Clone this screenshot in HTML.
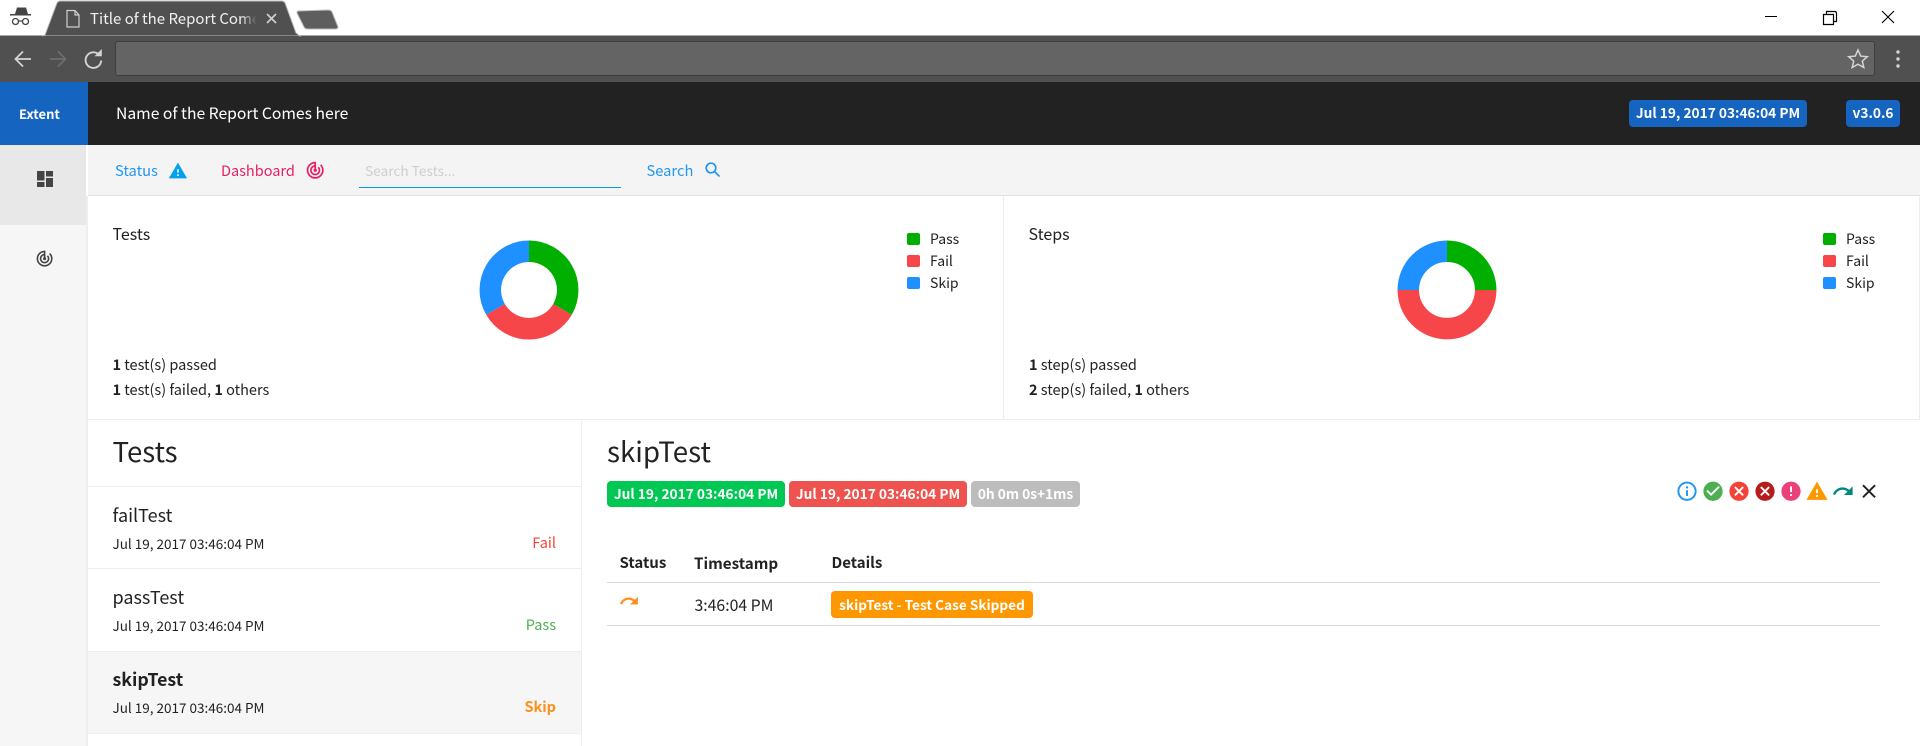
<!DOCTYPE html>
<html><head><meta charset="utf-8"><title>Title of the Report Comes here</title>
<style>
*{box-sizing:border-box}
html,body{margin:0;padding:0;width:1920px;height:746px;overflow:hidden;background:#fff}
body{position:relative;font-family:"Noto Sans CJK SC","Liberation Sans",sans-serif;color:#222;font-size:14px}
.a{position:absolute}
.t{position:absolute;white-space:nowrap;line-height:20px;height:20px}
.b{position:absolute;border-radius:4px;color:#fff;font-weight:700;font-size:13.700px;line-height:25.500px;text-align:center;white-space:nowrap}
svg{position:absolute;overflow:visible}
</style></head><body>
<!-- chrome -->
<div class="a" style="left:0;top:0;width:1920px;height:35px;background:#fff"></div>
<div class="a" style="left:0;top:35px;width:1920px;height:1px;background:#a8a8a8"></div>
<div class="a" style="left:0;top:36px;width:1920px;height:46px;background:#505050"></div>
<svg style="left:0;top:0" width="400" height="40">
<path d="M42 36 L45 35 L57 3 Q58 1 61 1 L281 1 Q284 1 285 3 L296 33 L300 36 Z" fill="#505050" stroke="#b8b8b8" stroke-width="1"/>
<path d="M43 36H299V38H43Z" fill="#505050"/>
<path d="M298 11 L328 10 Q331 10 332 12 L338 27 Q338 29 335 29 L308 29 Q305 29 304 27 L297 13 Q297 11 298 11Z" fill="#5e5e5e" stroke="#bbb" stroke-width="1"/>
<path d="M67 10.500H75L79 15V27H67Z M75 10.500V15H79" fill="none" stroke="#d0d0d0" stroke-width="1.200"/>
<path d="M267 14L276 23M276 14L267 23" stroke="#cfcfcf" stroke-width="1.700"/>
<path d="M15 14L17 7.500H26L28 14H31V15.500H10V14Z" fill="#444"/>
<circle cx="15.500" cy="21.500" r="3" fill="none" stroke="#444" stroke-width="1.300"/><circle cx="25.500" cy="21.500" r="3" fill="none" stroke="#444" stroke-width="1.300"/><path d="M18.500 21H22.500" stroke="#444" stroke-width="1.200"/>
</svg>
<div class="t" style="left:90px;top:8px;font-size:15px;line-height:22px;height:22px;width:167px;overflow:hidden;color:#f0f0f0;-webkit-mask-image:linear-gradient(90deg,#000 90%,transparent)">Title of the Report Comes here</div>
<svg style="left:0;top:36px" width="130" height="45">
<path d="M31 23H16M23 15.500L15.500 23L23 30.500" fill="none" stroke="#d4d4d4" stroke-width="1.800"/>
<path d="M50 23H65M58 15.500L65.500 23L58 30.500" fill="none" stroke="#6e6e6e" stroke-width="1.800"/>
<g transform="translate(0,4.500)"><path d="M99.300 14.500A7.800 7.800 0 1 0 101.200 20" fill="none" stroke="#d4d4d4" stroke-width="1.900"/><path d="M94.500 15.800H101.800V8.500Z" fill="#d4d4d4"/></g>
</svg>
<div class="a" style="left:115px;top:41px;width:1760px;height:35px;background:#646464;border:1px solid #3d3d3d;border-radius:3px"></div>
<svg style="left:1840px;top:36px" width="80" height="45">
<path d="M18 15.500L20.700 21.600L27.300 22.200L22.300 26.600L23.800 33L18 29.700L12.200 33L13.700 26.600L8.700 22.200L15.300 21.600Z" transform="translate(0,-1.500)" fill="none" stroke="#d4d4d4" stroke-width="1.500"/>
<circle cx="58" cy="16" r="1.700" fill="#d4d4d4"/><circle cx="58" cy="23" r="1.700" fill="#d4d4d4"/><circle cx="58" cy="30" r="1.700" fill="#d4d4d4"/>
</svg>
<svg style="left:1760px;top:0" width="160" height="35">
<path d="M5 16.500H17" stroke="#000" stroke-width="1"/>
<path d="M63.500 14.500H73.500V24.500H63.500Z M66.500 14V11.500H74.500Q76.500 11.500 76.500 13.500V21.500H74" fill="none" stroke="#000" stroke-width="1.200"/>
<path d="M122 11L134 23M134 11L122 23" stroke="#000" stroke-width="1.100"/>
</svg>
<!-- header -->
<div class="a" style="left:0;top:82px;width:1920px;height:63px;background:#222"></div>
<div class="a" style="left:0;top:82px;width:88px;height:63px;background:#1565c0"></div>
<div class="t" style="left:19px;top:104px;color:#fff;font-weight:700;font-size:13px">Extent</div>
<div class="t" style="left:116px;top:103px;color:#fff;font-size:15.700px">Name of the Report Comes here</div>
<div class="b" style="left:1629px;top:100px;width:178px;height:27px;background:#1565c0">Jul 19, 2017 03:46:04 PM</div>
<div class="b" style="left:1846px;top:100px;width:54px;height:27px;background:#1565c0">v3.0.6</div>
<!-- sidebar -->
<div class="a" style="left:0;top:145px;width:86px;height:601px;background:#f6f6f6"></div>
<div class="a" style="left:0;top:145px;width:86px;height:80px;background:#e8e8e8"></div>
<svg style="left:0;top:145px" width="86" height="130">
<path d="M37 26H44.500V35.500H37Z M37 37H44.500V42H37Z M46 26H53V31.500H46Z M46 33H53V42H46Z" fill="#444"/>
</svg>
<svg style="left:35.400px;top:249.400px" width="20" height="20"><path transform="scale(.8)" fill="#444" d="M19.070 4.930l-1.410 1.410C19.100 7.790 20 9.790 20 12c0 4.420-3.580 8-8 8s-8-3.580-8-8c0-4.080 3.050-7.440 7-7.930v2.020C8.160 6.570 6 9.030 6 12c0 3.310 2.690 6 6 6s6-2.690 6-6c0-1.660-.67-3.160-1.760-4.240l-1.410 1.410C15.550 9.900 16 10.900 16 12c0 2.210-1.790 4-4 4s-4-1.790-4-4c0-1.860 1.280-3.410 3-3.860v2.140c-.6.350-1 .98-1 1.720 0 1.100.9 2 2 2s2-.9 2-2c0-.74-.4-1.380-1-1.720V2h-1C6.480 2 2 6.480 2 12s4.480 10 10 10 10-4.480 10-10c0-2.760-1.120-5.260-2.930-7.070z"/></svg>
<!-- subnav -->
<div class="a" style="left:88px;top:145px;width:1832px;height:50px;background:#f4f4f4"></div>
<div class="a" style="left:88px;top:195px;width:1832px;height:1px;background:#e0e0e0"></div>
<div class="t" style="left:115px;top:161px;color:#2196f3;font-size:14.700px">Status</div>
<svg style="left:168px;top:160.500px" width="20" height="20"><path transform="scale(.83)" fill="#03a0ee" d="M1 21h22L12 2 1 21zm12-3h-2v-2h2v2zm0-4h-2v-4h2v4z"/></svg>
<div class="t" style="left:221px;top:161px;color:#e91e63;font-size:14.500px">Dashboard</div>
<svg style="left:305.300px;top:159.800px" width="20" height="20"><path transform="scale(.85)" fill="#e91e63" d="M19.070 4.930l-1.410 1.410C19.100 7.790 20 9.790 20 12c0 4.420-3.580 8-8 8s-8-3.580-8-8c0-4.080 3.050-7.440 7-7.930v2.020C8.160 6.570 6 9.030 6 12c0 3.310 2.690 6 6 6s6-2.690 6-6c0-1.660-.67-3.160-1.760-4.240l-1.410 1.410C15.550 9.900 16 10.900 16 12c0 2.210-1.790 4-4 4s-4-1.790-4-4c0-1.860 1.280-3.410 3-3.860v2.140c-.6.350-1 .98-1 1.720 0 1.100.9 2 2 2s2-.9 2-2c0-.74-.4-1.380-1-1.720V2h-1C6.480 2 2 6.480 2 12s4.480 10 10 10 10-4.480 10-10c0-2.760-1.120-5.260-2.930-7.070z"/></svg>
<div class="t" style="left:365px;top:160px;color:#cfcfcf;font-size:13.700px">Search Tests...</div>
<div class="a" style="left:359px;top:187px;width:262px;height:1px;background:#039be5"></div>
<div class="t" style="left:646.500px;top:161px;color:#2196f3;font-size:14.700px">Search</div>
<svg style="left:704px;top:161px" width="18" height="18" fill="none" stroke="#2196f3" stroke-width="1.700"><circle cx="7" cy="7" r="4.800"/><path d="M10.500 10.500L15.500 15.500"/></svg>
<!-- cards -->
<div class="a" style="left:1003px;top:196px;width:1px;height:224px;background:#eee"></div>
<div class="a" style="left:1919px;top:196px;width:1px;height:224px;background:#eee"></div>
<div class="a" style="left:88px;top:419px;width:1832px;height:1px;background:#eee"></div>
<div class="t" style="left:112.500px;top:223px;font-size:16px">Tests</div>
<div class="t" style="left:1028.500px;top:223px;font-size:16px">Steps</div>
<svg style="left:0;top:0" width="1920" height="420">
<g fill="none" stroke-width="21.500" transform="translate(0,-3)">
<path d="M529 254.300A38.700 38.700 0 0 1 562.500 312.400" stroke="#00af00"/>
<path d="M562.500 312.400A38.700 38.700 0 0 1 495.500 312.400" stroke="#f7464a"/>
<path d="M495.500 312.400A38.700 38.700 0 0 1 529 254.300" stroke="#1e90ff"/>
<path d="M1447 254.300A38.700 38.700 0 0 1 1485.700 293" stroke="#00af00"/>
<path d="M1485.700 293A38.700 38.700 0 0 1 1408.300 293" stroke="#f7464a"/>
<path d="M1408.300 293A38.700 38.700 0 0 1 1447 254.300" stroke="#1e90ff"/>
</g>
<g>
<rect x="907" y="233" width="13" height="12" rx="2" fill="#00af00"/><rect x="907" y="255" width="13" height="12" rx="2" fill="#f7464a"/><rect x="907" y="277" width="13" height="12" rx="2" fill="#1e90ff"/>
<rect x="1823" y="233" width="13" height="12" rx="2" fill="#00af00"/><rect x="1823" y="255" width="13" height="12" rx="2" fill="#f7464a"/><rect x="1823" y="277" width="13" height="12" rx="2" fill="#1e90ff"/>
</g></svg>
<div class="t" style="left:930px;top:229px">Pass</div><div class="t" style="left:930px;top:251px">Fail</div><div class="t" style="left:930px;top:273px">Skip</div>
<div class="t" style="left:1846px;top:229px">Pass</div><div class="t" style="left:1846px;top:251px">Fail</div><div class="t" style="left:1846px;top:273px">Skip</div>
<div class="t" style="left:112.500px;top:355px;font-size:14.500px"><b>1</b> test(s) passed</div>
<div class="t" style="left:112.500px;top:380px;font-size:14.500px"><b>1</b> test(s) failed, <b>1</b> others</div>
<div class="t" style="left:1029px;top:355px;font-size:14.500px"><b>1</b> step(s) passed</div>
<div class="t" style="left:1029px;top:380px;font-size:14.500px"><b>2</b> step(s) failed, <b>1</b> others</div>
<!-- list -->
<div class="a" style="left:581px;top:420px;width:1px;height:326px;background:#eee"></div>
<div class="a" style="left:86px;top:196px;width:2px;height:550px;background:#eee"></div>
<div class="a" style="left:88px;top:651px;width:493px;height:82px;background:#f6f6f6"></div>
<div class="a" style="left:88px;top:486px;width:493px;height:1px;background:#eee"></div>
<div class="a" style="left:88px;top:568px;width:493px;height:1px;background:#eee"></div>
<div class="a" style="left:88px;top:651px;width:493px;height:1px;background:#eee"></div>
<div class="a" style="left:88px;top:733px;width:493px;height:1px;background:#eee"></div>
<div class="t" style="left:112.500px;top:440px;font-size:27.600px;line-height:20px">Tests</div>
<div class="t" style="left:112.500px;top:505px;font-size:18px">failTest</div>
<div class="t" style="left:112.500px;top:533px;font-size:13.500px">Jul 19, 2017 03:46:04 PM</div>
<div class="t" style="right:1364px;top:533px;font-size:14.500px;color:#f44336">Fail</div>
<div class="t" style="left:112.500px;top:587px;font-size:18px">passTest</div>
<div class="t" style="left:112.500px;top:615px;font-size:13.500px">Jul 19, 2017 03:46:04 PM</div>
<div class="t" style="right:1364px;top:615px;font-size:14.500px;color:#4caf50">Pass</div>
<div class="t" style="left:112.500px;top:669px;font-size:17.700px;font-weight:700">skipTest</div>
<div class="t" style="left:112.500px;top:697px;font-size:13.500px">Jul 19, 2017 03:46:04 PM</div>
<div class="t" style="right:1364px;top:697px;font-size:14.500px;color:#ff8f1c;font-weight:700">Skip</div>
<!-- detail -->
<div class="t" style="left:607px;top:440px;font-size:27.700px">skipTest</div>
<div class="b" style="left:607px;top:481px;width:178px;height:26px;background:#00c853">Jul 19, 2017 03:46:04 PM</div>
<div class="b" style="left:789px;top:481px;width:178px;height:26px;background:#ef5350">Jul 19, 2017 03:46:04 PM</div>
<div class="b" style="left:971px;top:481px;width:109px;height:26px;background:#bdbdbd">0h 0m 0s+1ms</div>
<svg style="left:0;top:0" width="1920" height="746">
<g transform="translate(1675.500,479.700) scale(.96)"><path fill="#2196f3" d="M11 17h2v-6h-2v6zm1-15C6.480 2 2 6.480 2 12s4.480 10 10 10 10-4.480 10-10S17.520 2 12 2zm0 18c-4.410 0-8-3.590-8-8s3.590-8 8-8 8 3.590 8 8-3.590 8-8 8zM11 9h2V7h-2v2z"/></g>
<g transform="translate(1701.500,479.700) scale(.96)"><path fill="#4caf50" d="M12 2C6.480 2 2 6.480 2 12s4.480 10 10 10 10-4.480 10-10S17.520 2 12 2zm-2 15l-5-5 1.410-1.410L10 14.170l7.590-7.590L19 8l-9 9z"/></g>
<g transform="translate(1727.500,479.700) scale(.96)"><path fill="#f44336" d="M12 2C6.470 2 2 6.470 2 12s4.470 10 10 10 10-4.470 10-10S17.530 2 12 2zm5 13.590L15.590 17 12 13.410 8.410 17 7 15.590 10.590 12 7 8.410 8.410 7 12 10.590 15.590 7 17 8.410 13.410 12 17 15.590z"/></g>
<g transform="translate(1753.500,479.700) scale(.96)"><path fill="#b71c1c" d="M12 2C6.470 2 2 6.470 2 12s4.470 10 10 10 10-4.470 10-10S17.530 2 12 2zm5 13.590L15.590 17 12 13.410 8.410 17 7 15.590 10.590 12 7 8.410 8.410 7 12 10.590 15.590 7 17 8.410 13.410 12 17 15.590z"/></g>
<g transform="translate(1779.500,479.700) scale(.96)"><path fill="#ec407a" d="M12 2C6.480 2 2 6.480 2 12s4.480 10 10 10 10-4.480 10-10S17.520 2 12 2zm1 15h-2v-2h2v2zm0-4h-2V7h2v6z"/></g>
<g transform="translate(1805.500,479.700) scale(.96)"><path fill="#ff9800" d="M1 21h22L12 2 1 21zm12-3h-2v-2h2v2zm0-4h-2v-4h2v4z"/></g>
<g transform="translate(1831.500,479.700) scale(.96)"><path fill="#00897b" d="M18.400 10.600C16.550 8.990 14.150 8 11.500 8c-4.650 0-8.580 3.030-9.960 7.220L3.900 16c1.050-3.190 4.050-5.500 7.600-5.500 1.950 0 3.730.72 5.120 1.880L13 16h9V7l-3.600 3.600z"/></g>
<g transform="translate(1857.500,479.700) scale(.96)"><path fill="#222" d="M19 6.410L17.590 5 12 10.590 6.410 5 5 6.410 10.590 12 5 17.590 6.410 19 12 13.410 17.590 19 19 17.590 13.410 12z"/></g>
<g transform="translate(618.700,590.600) scale(.87)"><path fill="#ff8f1c" d="M18.400 10.600C16.550 8.990 14.150 8 11.500 8c-4.650 0-8.580 3.030-9.960 7.220L3.900 16c1.050-3.190 4.050-5.500 7.600-5.500 1.950 0 3.730.72 5.120 1.880L13 16h9V7l-3.600 3.600z"/></g>
</svg>
<div class="t" style="left:619.500px;top:553px;font-weight:700;font-size:15px">Status</div>
<div class="t" style="left:694px;top:553px;font-weight:700;font-size:15.200px">Timestamp</div>
<div class="t" style="left:831.500px;top:553px;font-weight:700;font-size:15px">Details</div>
<div class="a" style="left:607px;top:582px;width:1273px;height:1px;background:#d8d8d8"></div>
<div class="a" style="left:607px;top:625px;width:1273px;height:1px;background:#d8d8d8"></div>
<div class="t" style="left:694.500px;top:594.500px;font-size:15.800px">3:46:04 PM</div>
<div class="b" style="left:831px;top:591px;width:202px;height:27px;background:#ff9800;font-size:13.600px;line-height:26.500px">skipTest - Test Case Skipped</div>
</body></html>
